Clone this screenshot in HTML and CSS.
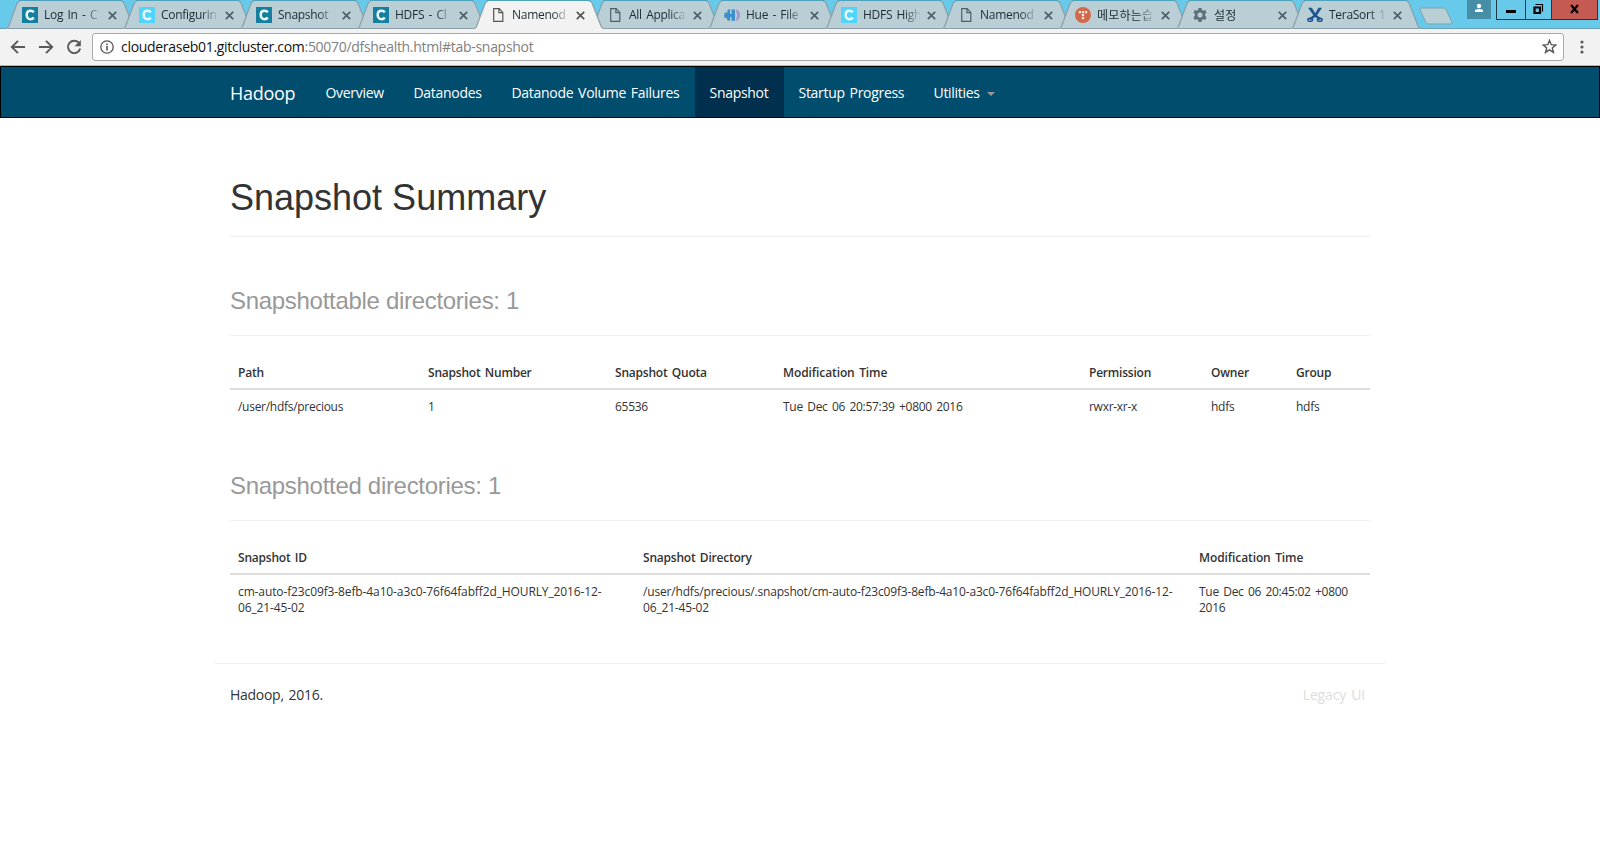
FILE: index.html
```html
<!DOCTYPE html>
<html lang="en">
<head>
<meta charset="utf-8">
<title>Namenode information</title>
<link rel="stylesheet" href="styles.css">
</head>
<body>
<svg class="defs" aria-hidden="true">
  <symbol id="tab-shape" viewBox="0 0 130 29">
    <path class="tab-fill" d="M0 29C1.500 28.500 2 27.500 2.500 26.500L11 3.500Q12 1 14 1H115Q117 1 118 3L127 26Q128 28.500 130 29Z"/>
    <path class="tab-side" d="M.5 28.500C1.500 28 2 27.500 2.500 26.500L11 3.500Q12 1 14 .8M115 .8Q117 1 118 3L127 26Q128 28.500 129.500 28.500"/>
    <path class="tab-top" d="M13 .5H116"/>
  </symbol>
  <symbol id="close" viewBox="0 0 9 9"><path d="M.8.8l7.400 7.400M8.200.8L.8 8.200" fill="none" stroke="currentColor" stroke-width="1.700"/></symbol>
  <symbol id="cloudera" viewBox="0 0 16 16"><rect width="16" height="16" fill="currentColor"/><path d="M11.800 5.400C11 4.200 9.900 3.800 8.500 3.800 6.100 3.800 4.700 5.600 4.700 8s1.400 4.200 3.800 4.200c1.400 0 2.500-.5 3.300-1.700" fill="none" stroke="#eaf8fc" stroke-width="2.500"/></symbol>
  <symbol id="page" viewBox="0 0 16 16"><path d="M3.700 1.700h5.500l3.600 3.700v8.900H3.700zM8.900 1.700v4h3.900" fill="none" stroke="currentColor" stroke-width="1.200"/></symbol>
  <symbol id="hue" viewBox="0 0 16 16"><path d="M3.500 3L6 2v5h1.500V2.500H11v11.300H7.500V10H6v4l-3-1v-2H.8L0 8.500 1 5.500h2.500z" fill="#3a8fcf"/><path d="M12.300 2.300Q16 4 16 8.200T12.300 14v-2.500l1-3.300-1-3z" fill="#a396c8"/></symbol>
  <symbol id="tistory" viewBox="0 0 16 16"><circle cx="8" cy="8" r="8" fill="#d3694a"/><g fill="#fbe9e3"><rect x="3.800" y="4" width="2.200" height="2.200"/><rect x="6.900" y="4" width="2.200" height="2.200"/><rect x="10" y="4" width="2.200" height="2.200"/><rect x="6.900" y="7" width="2.200" height="2.200"/><rect x="6.900" y="10" width="2.200" height="2.200"/></g></symbol>
  <symbol id="gear" viewBox="0 0 16 16"><path fill-rule="evenodd" d="M6.500 1h3l.4 2 1.300.7 1.900-.7 1.500 2.600-1.500 1.400v2l1.500 1.400-1.500 2.600-1.900-.7-1.300.7-.4 2h-3l-.4-2-1.300-.7-1.900.7-1.500-2.600L2.900 9V7L1.400 5.600 2.900 3l1.900.7L6.100 3zM8 5.500a2.500 2.500 0 100 5 2.500 2.500 0 000-5z" fill="#5b7078"/></symbol>
  <symbol id="scissors" viewBox="0 0 16 16"><g fill="#1c5590"><path d="M1 .8h3.800L9 7.500l5.500 4.300-2 1.500L7 9z"/><path d="M15 .8h-3.500L7.500 7.500 1.500 11.800l2 1.500L9.500 9z"/></g><g fill="none" stroke="#1c5590" stroke-width="1.400"><ellipse cx="3.200" cy="12.800" rx="2.400" ry="1.600"/><ellipse cx="12.800" cy="12.800" rx="2.400" ry="1.600"/></g></symbol>
</svg>

<header class="browser">
  <div class="titlebar">
    <div class="tabs">
      <div class="tab"><svg class="shape"><use href="#tab-shape"/></svg><svg class="fav teal"><use href="#cloudera"/></svg><span class="title">Log In - C</span><svg class="x"><use href="#close"/></svg></div>
      <div class="tab"><svg class="shape"><use href="#tab-shape"/></svg><svg class="fav cyan"><use href="#cloudera"/></svg><span class="title">Configurin</span><svg class="x"><use href="#close"/></svg></div>
      <div class="tab"><svg class="shape"><use href="#tab-shape"/></svg><svg class="fav teal"><use href="#cloudera"/></svg><span class="title">Snapshot</span><svg class="x"><use href="#close"/></svg></div>
      <div class="tab"><svg class="shape"><use href="#tab-shape"/></svg><svg class="fav teal"><use href="#cloudera"/></svg><span class="title">HDFS - Cl</span><svg class="x"><use href="#close"/></svg></div>
      <div class="tab current"><svg class="shape"><use href="#tab-shape"/></svg><svg class="fav"><use href="#page"/></svg><span class="title">Namenod</span><svg class="x"><use href="#close"/></svg></div>
      <div class="tab"><svg class="shape"><use href="#tab-shape"/></svg><svg class="fav"><use href="#page"/></svg><span class="title">All Applica</span><svg class="x"><use href="#close"/></svg></div>
      <div class="tab"><svg class="shape"><use href="#tab-shape"/></svg><svg class="fav"><use href="#hue"/></svg><span class="title">Hue - File</span><svg class="x"><use href="#close"/></svg></div>
      <div class="tab"><svg class="shape"><use href="#tab-shape"/></svg><svg class="fav cyan"><use href="#cloudera"/></svg><span class="title">HDFS High</span><svg class="x"><use href="#close"/></svg></div>
      <div class="tab"><svg class="shape"><use href="#tab-shape"/></svg><svg class="fav"><use href="#page"/></svg><span class="title">Namenod</span><svg class="x"><use href="#close"/></svg></div>
      <div class="tab"><svg class="shape"><use href="#tab-shape"/></svg><svg class="fav"><use href="#tistory"/></svg><span class="title korean" lang="ko">메모하는습</span><svg class="x"><use href="#close"/></svg></div>
      <div class="tab"><svg class="shape"><use href="#tab-shape"/></svg><svg class="fav"><use href="#gear"/></svg><span class="title korean" lang="ko">설정</span><svg class="x"><use href="#close"/></svg></div>
      <div class="tab last"><svg class="shape"><use href="#tab-shape"/></svg><svg class="fav"><use href="#scissors"/></svg><span class="title">TeraSort 1</span><svg class="x"><use href="#close"/></svg></div>
    </div>
    <svg class="newtab" viewBox="0 0 34 18"><path d="M2.500 1H24.500Q26.500 1 27.300 3L32.800 15Q33.500 17 31.500 17H9Q7.300 17 6.500 15L1.300 3Q.6 1 2.500 1Z" fill="#b9ced5" stroke="#7fa3b3"/></svg>
    <div class="controls">
      <div class="profile"><svg viewBox="0 0 24 19"><circle cx="12" cy="6" r="2.200" fill="#fff"/><path d="M8 12V10.800Q8 9 12 9t4 1.800V12z" fill="#fff"/></svg></div>
      <div class="winbtns">
        <div class="win min"><svg viewBox="0 0 28 19"><path d="M9 10h10v3H9z"/></svg></div>
        <div class="win max"><svg viewBox="0 0 25 19"><path d="M8.500 7.500h5.500v5.500H8.500z" fill="none" stroke="#000" stroke-width="2.200"/><path d="M9.500 4.500H16.500V11.500" fill="none" stroke="#000" stroke-width="1.200"/></svg></div>
        <div class="win shut"><svg viewBox="0 0 46 19"><path d="M19.500 5l7 8M26.500 5l-7 8" fill="none" stroke="#000" stroke-width="2.300"/></svg></div>
      </div>
    </div>
  </div>
  <div class="toolbar">
    <svg class="tool" viewBox="0 0 16 16"><path d="M15 8H2M8 1.800L1.800 8 8 14.200" fill="none" stroke="#5a5a5a" stroke-width="1.900"/></svg>
    <svg class="tool" viewBox="0 0 16 16"><path d="M1 8h13M8 1.800L14.200 8 8 14.200" fill="none" stroke="#5a5a5a" stroke-width="1.900"/></svg>
    <svg class="tool" viewBox="0 0 16 16"><path d="M13.200 4.200A6.200 6.200 0 1014.200 9.500" fill="none" stroke="#5a5a5a" stroke-width="1.900"/><path d="M14.800 1v6.200H8.600z" fill="#5a5a5a"/></svg>
    <div class="omnibox">
      <svg class="info" viewBox="0 0 14 14"><circle cx="7" cy="7" r="6.200" fill="none" stroke="#555" stroke-width="1.300"/><path d="M6.200 6h1.600v4.400H6.200zM6.200 3.400h1.600V5H6.200z" fill="#555"/></svg>
      <span class="url"><span class="host">clouderaseb01.gitcluster.com</span>:50070/dfshealth.html#tab-snapshot</span>
      <svg class="star" viewBox="0 0 14 14"><path d="M7 1.300l1.600 4 4.300.3-3.300 2.700 1.100 4.200L7 10.200l-3.700 2.300 1.100-4.200L1.100 5.600l4.300-.3z" fill="none" stroke="#555" stroke-width="1.300"/></svg>
    </div>
    <svg class="more" viewBox="0 0 4 14"><g fill="#5a5a5a"><circle cx="2" cy="2" r="1.600"/><circle cx="2" cy="7" r="1.600"/><circle cx="2" cy="12" r="1.600"/></g></svg>
  </div>
</header>

<nav class="navbar">
  <div class="container nav-row">
    <span class="brand">Hadoop</span>
    <a class="link overview">Overview</a>
    <a class="link datanodes">Datanodes</a>
    <a class="link failures">Datanode Volume Failures</a>
    <a class="link active">Snapshot</a>
    <a class="link startup">Startup Progress</a>
    <a class="link">Utilities<span class="caret"></span></a>
  </div>
</nav>

<main class="container">
  <h1>Snapshot Summary</h1>
  <h3>Snapshottable directories: 1</h3>
  <table class="table">
    <colgroup><col class="c190"><col class="c187"><col class="c168"><col class="c306"><col class="c122"><col class="c85"><col></colgroup>
    <thead><tr><th>Path</th><th>Snapshot Number</th><th>Snapshot Quota</th><th class="mtime">Modification Time</th><th>Permission</th><th>Owner</th><th>Group</th></tr></thead>
    <tbody><tr><td>/user/hdfs/precious</td><td>1</td><td>65536</td><td>Tue Dec 06 20:57:39 +0800 2016</td><td>rwxr-xr-x</td><td>hdfs</td><td>hdfs</td></tr></tbody>
  </table>
  <h3 class="second">Snapshotted directories: 1</h3>
  <table class="table">
    <colgroup><col class="c405"><col class="c556"><col></colgroup>
    <thead><tr><th>Snapshot ID</th><th>Snapshot Directory</th><th class="mtime">Modification Time</th></tr></thead>
    <tbody><tr><td class="id">cm-auto-f23c09f3-8efb-4a10-a3c0-76f64fabff2d_HOURLY_2016-12-<br>06_21-45-02</td><td class="dir">/user/hdfs/precious/.snapshot/cm-auto-f23c09f3-8efb-4a10-a3c0-76f64fabff2d_HOURLY_2016-12-<br>06_21-45-02</td><td>Tue Dec 06 20:45:02 +0800 2016</td></tr></tbody>
  </table>
</main>

<footer class="footer"><span>Hadoop, 2016.</span><a class="legacy">Legacy UI</a></footer>
</body>
</html>
```
FILE: styles.css
```css
* { box-sizing: border-box; }

body {
  margin: 0;
  background: #fff;
  color: #333;
  font: 14px/20px "Open Sans", "Noto Sans CJK KR", sans-serif;
  letter-spacing: -.28px;
  word-spacing: 1.5px;
}

svg { display: block; flex: none; }
.defs { position: absolute; width: 0; height: 0; }

/* Browser window */
.titlebar {
  display: flex;
  height: 29px;
  padding-left: 6px;
  background: #67caea;
  box-shadow: inset 0 -1px #6c9fb3;
}
.tabs { display: flex; }
.tab {
  position: relative;
  display: flex;
  align-items: center;
  width: 130px;
  height: 29px;
  margin-right: -13px;
  padding: 0 0 0 16px;
  color: #4d6067;
  fill: #b9ced5;
}
.tab.last { margin-left: -2px; }
.shape { position: absolute; inset: 0; width: 130px; height: 29px; }
.tab-fill { fill: inherit; }
.tab-side { fill: none; stroke: #8a9fa8; stroke-width: 1.2; }
.tab-top { fill: none; stroke: #4fa2bb; }
.tab::after {
  content: "";
  position: absolute;
  left: 2px;
  right: 2px;
  bottom: 0;
  height: 1px;
  background: #8a9fa8;
}
.tab.current { z-index: 2; color: #555; fill: #f2f2f2; }
.tab.current::after { background: #f2f2f2; }
.fav { position: relative; width: 16px; height: 16px; margin-top: 1px; }
.teal { color: #147f9f; }
.cyan { color: #4fd4fb; }
.title {
  position: relative;
  width: 58px;
  margin: 0 6px 0 6px;
  white-space: nowrap;
  color: #1f2c31;
  font-size: 12px;
  -webkit-mask-image: linear-gradient(90deg, #000 70%, transparent);
  mask-image: linear-gradient(90deg, #000 70%, transparent);
}
.korean { font-family: "Noto Sans CJK KR", sans-serif; letter-spacing: .2px; }
.x { position: relative; width: 9px; height: 9px; margin-top: 1px; }
.newtab { width: 34px; height: 18px; margin: 7px 0 0 11px; }
.controls { display: flex; margin-left: auto; padding-right: 2px; }
.profile { width: 24px; height: 19px; margin-right: 5px; background: #468ea6; }
.winbtns { display: flex; height: 20px; border: 1px solid #23363d; border-top: 0; }
.win + .win { border-left: 1px solid #23363d; }
.min { width: 28px; }
.max { width: 26px; }
.shut { width: 46px; background: #c45a51; }
.win svg { width: 100%; height: 19px; }

.toolbar {
  display: flex;
  align-items: center;
  height: 37px;
  padding: 0 16px 1px 10px;
  background: #f2f2f2;
  border-bottom: 1px solid #b4b6b8;
}
.tool { width: 16px; height: 16px; margin-right: 12px; }
.omnibox {
  display: flex;
  align-items: center;
  flex: 1;
  height: 28px;
  margin: 0 16px 0 -2px;
  padding: 0 6px 0 7px;
  background: #fff;
  border: 1px solid #a9a9a9;
  border-radius: 3px;
}
.info { width: 14px; height: 14px; }
.url { flex: 1; margin-left: 7px; color: #808080; letter-spacing: -.3px; }
.host { color: #111; }
.star { width: 15px; height: 15px; }
.more { width: 4px; height: 14px; }

/* Page */
.container { width: 1140px; margin: 0 auto; }
.navbar { height: 52px; background: #014d6e; border: 1px solid #000; }
.nav-row { display: flex; height: 50px; line-height: 52px; color: #fff; }
.brand { width: 81px; font-size: 18px; }
.link { padding: 0 15px 0 14.5px; white-space: nowrap; letter-spacing: -.3px; }
.overview { width: 88px; }
.datanodes { width: 98px; }
.failures { width: 198px; }
.active { width: 89px; background: #00304d; }
.startup { width: 135px; }
.caret {
  display: inline-block;
  margin-left: 7.5px;
  vertical-align: middle;
  border: 4px solid transparent;
  border-top-color: #999;
  border-bottom: 0;
}

h1, h3 {
  margin: 0;
  border-bottom: 1px solid #eee;
  font-family: "Liberation Sans", Arial, sans-serif;
  font-weight: 400;
  letter-spacing: 0;
  word-spacing: 0;
}
h1 { height: 119px; padding-top: 60px; font-size: 36px; line-height: 40px; }
h3 { height: 99px; padding-top: 51px; color: #999; font-size: 24px; line-height: 26px; letter-spacing: -.3px; }
.second { height: 80px; padding-top: 32px; }

.table {
  width: 100%;
  min-height: 85px;
  margin: 20px 0 0;
  border-collapse: separate;
  border-spacing: 0;
  table-layout: fixed;
  font-size: 12px;
  line-height: 16px;
}
.table th { height: 34px; padding: 9px 8px 7px; border-bottom: 2px solid #ddd; text-align: left; font-weight: 600; letter-spacing: -.22px; }
.table .mtime { letter-spacing: -.1px; }
.table td { padding: 9px 8px; vertical-align: top; }
.table .id { letter-spacing: -.118px; }
.table .dir { letter-spacing: -.17px; }
.c190 { width: 190px; }
.c187 { width: 187px; }
.c168 { width: 168px; }
.c306 { width: 306px; }
.c122 { width: 122px; }
.c85 { width: 85px; }
.c405 { width: 405px; }
.c556 { width: 556px; }

.footer {
  display: flex;
  justify-content: space-between;
  width: 1170px;
  margin: 37px auto 0;
  padding: 21px 20px 0 15px;
  border-top: 1px solid #eee;
}
.legacy { color: #ddd; letter-spacing: -.14px; }
```
